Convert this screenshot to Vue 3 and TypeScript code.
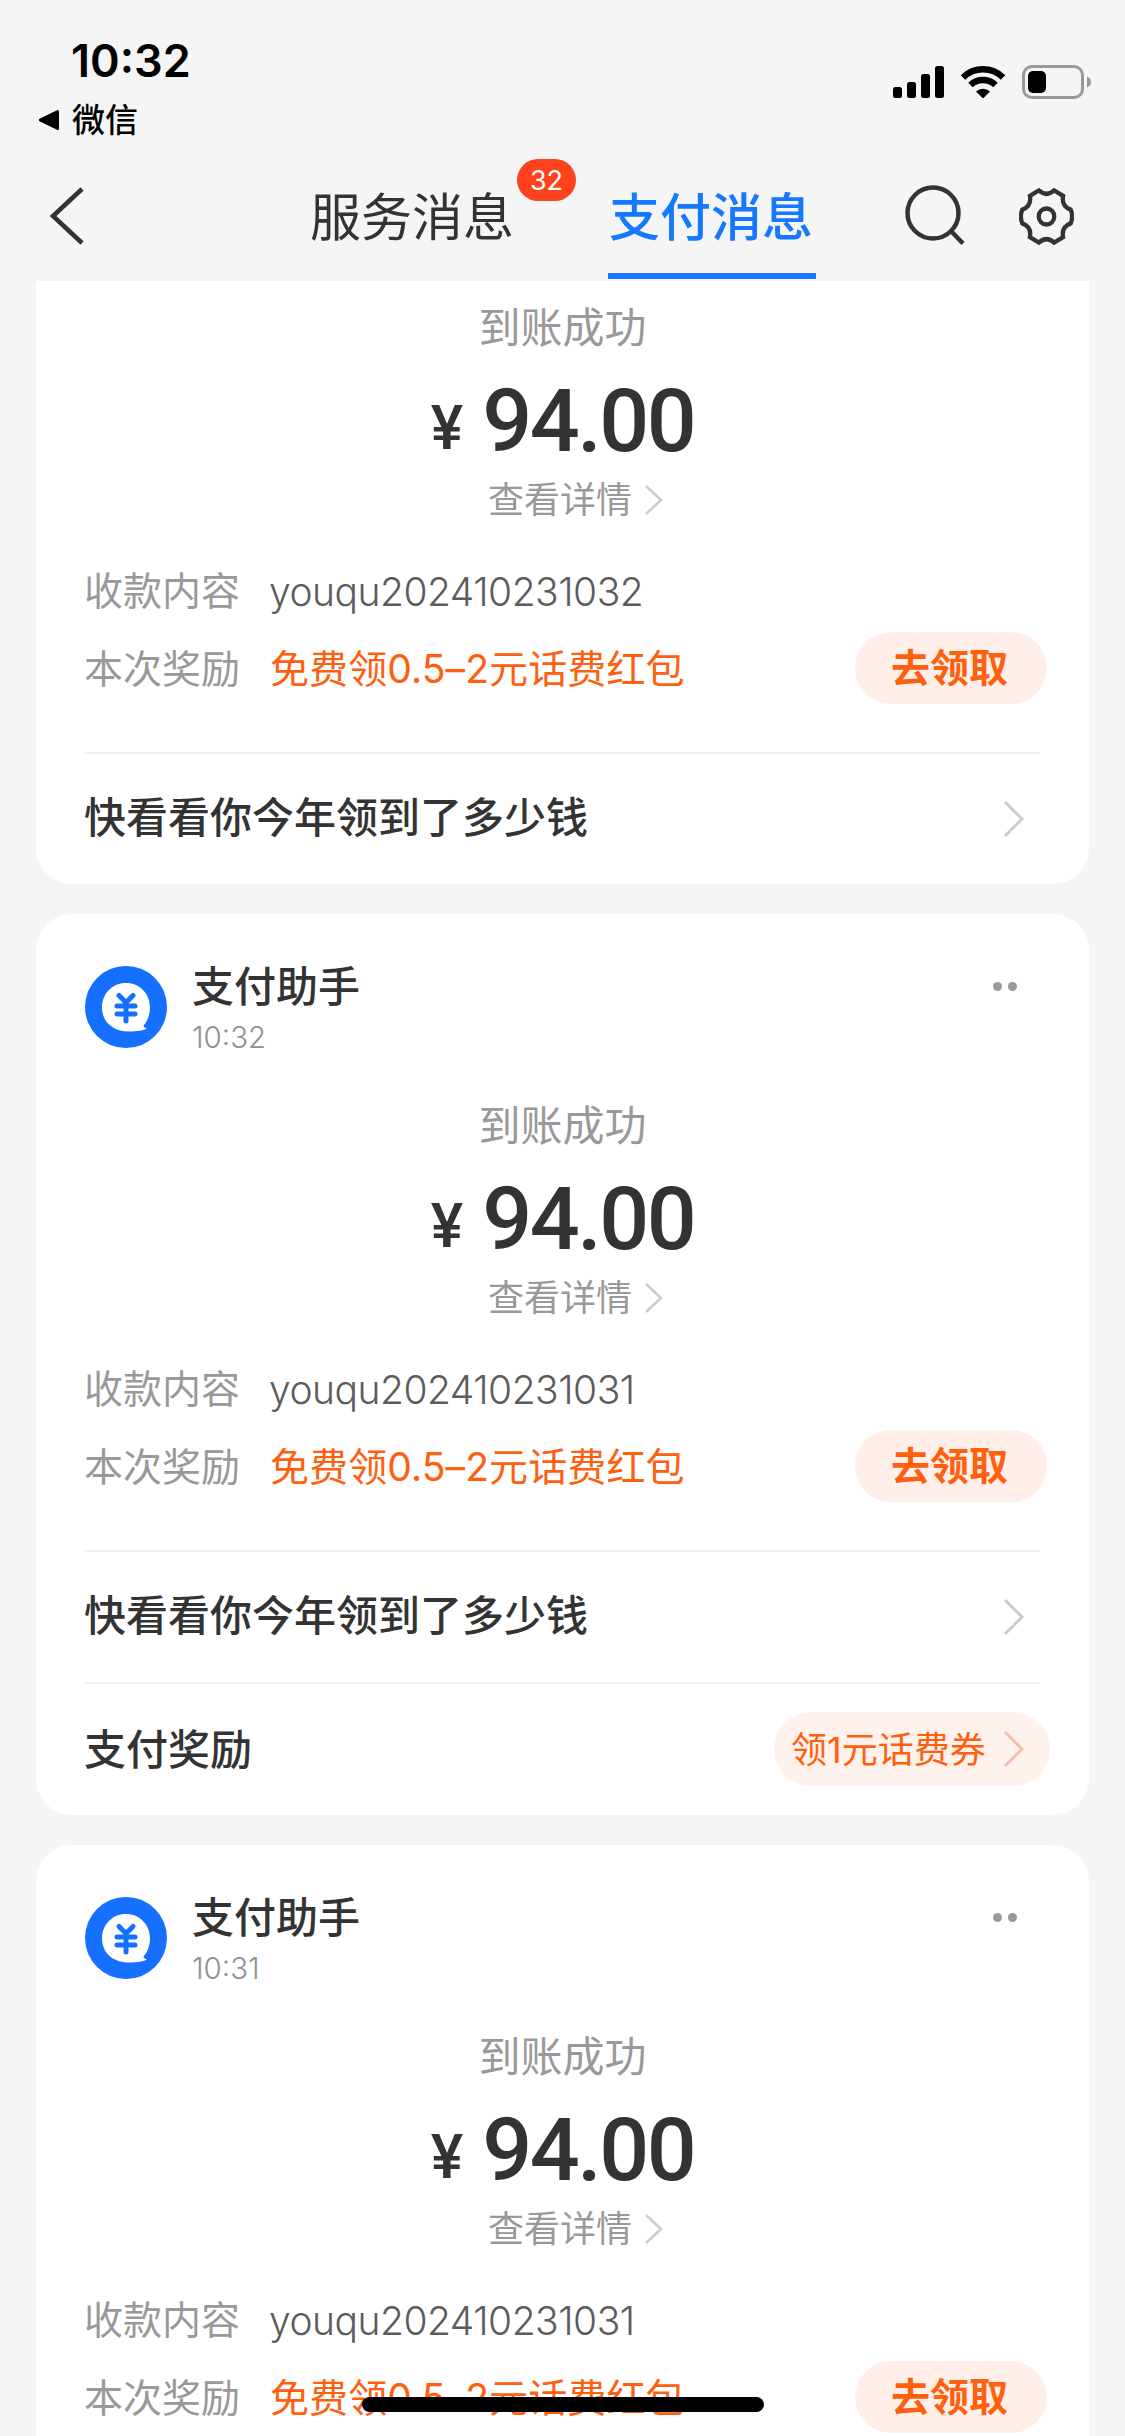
<script setup lang="ts">
interface Message {
  time: string
  memo: string
  partial?: boolean
  promo?: boolean
  coupon?: boolean
}

const messages: Message[] = [
  { time: '', memo: 'youqu202410231032', partial: true, promo: true },
  { time: '10:32', memo: 'youqu202410231031', promo: true, coupon: true },
  { time: '10:31', memo: 'youqu202410231031' },
]
</script>

<template>
  <div class="screen">
    <header class="top">
      <div class="status">
        <div class="status-left">
          <div class="clock">10:32</div>
          <div class="return">
            <svg width="22" height="22" viewBox="0 0 22 22"><path d="M2 9.6 19 1.2Q21 .4 21 2.5V19.5Q21 21.600 19 20.800L2 12.400Q-.4 11 2 9.600Z" /></svg>
            <span>微信</span>
          </div>
        </div>
        <div class="status-icons">
          <svg width="51" height="34" viewBox="0 0 51 34">
            <rect x="0" y="22" width="9" height="11" rx="2.500" />
            <rect x="14" y="17" width="9" height="16" rx="2.500" />
            <rect x="28" y="9" width="9" height="24" rx="2.500" />
            <rect x="42" y="1" width="9" height="32" rx="2.500" />
          </svg>
          <svg class="wifi" width="46" height="34" viewBox="0 0 46 34">
            <path d="M3 12.500A28.500 28.500 0 0 1 43 12.500M10.500 20A18 18 0 0 1 35.500 20" fill="none" stroke="#000" stroke-width="6.400" />
            <path d="M16 26.500A10 10 0 0 1 30 26.500L24 32.500Q23 33.500 22 32.500Z" />
          </svg>
          <svg class="battery" width="70" height="34" viewBox="0 0 70 34">
            <rect x="1.500" y="1.500" width="59" height="31" rx="8.500" fill="none" stroke="#999" stroke-width="3" />
            <rect x="6" y="6" width="18" height="22" rx="5" />
            <path d="M65 11.500Q69 13 69 17T65 22.500Z" fill="#999" />
          </svg>
        </div>
      </div>
      <nav class="nav">
        <svg class="back" width="36" height="60" viewBox="0 0 36 60"><path d="M33 3 4 30 33 57" /></svg>
        <div class="tab first">服务消息<span class="badge">32</span></div>
        <div class="tab active">支付消息</div>
        <svg class="search" width="62" height="62" viewBox="0 0 62 62"><circle cx="28" cy="28" r="25.500" /><path d="M46 46 58 58.500" /></svg>
        <svg class="gear" width="55" height="57" viewBox="0 0 58 58" preserveAspectRatio="none">
          <path d="M21 2.500Q29 9.500 37 2.500L46.500 8Q44.500 18.500 54.500 22Q57.500 29 54.500 36Q44.500 39.500 46.500 50L37 55.500Q29 48.500 21 55.500L11.500 50Q13.500 39.500 3.500 36Q.5 29 3.500 22Q13.500 18.500 11.500 8Z" />
          <circle cx="29" cy="29" r="8.200" />
        </svg>
      </nav>
    </header>

    <main class="list">
      <section v-for="(m, i) in messages" :key="i" class="card" :class="{ partial: m.partial }">
        <div v-if="!m.partial" class="head">
          <svg class="avatar" width="82" height="82" viewBox="0 0 82 82">
            <circle cx="41" cy="41" r="41" fill="#1570ff" />
            <path d="M41 17C27.500 17 17 27.500 17 41.500 17 56 28 65.500 44 65.500 52 65.500 59 64.500 62 62.500 60.500 62 58.500 61 58.500 59.500 62 56 65 49 65 41.500 65 27.500 54.500 17 41 17Z" fill="#fff" />
            <path d="M34 29.500 41 36.500 48 29.500M32 40H50M32 48H50M41 38V55" fill="none" stroke="#1570ff" stroke-width="5" stroke-linecap="round" />
          </svg>
          <div class="who">
            <div class="name">支付助手</div>
            <div class="time">{{ m.time }}</div>
          </div>
          <div class="more"><i></i><i></i></div>
        </div>

        <div class="summary">
          <div class="state">到账成功</div>
          <div class="amount"><span class="yen">¥</span><span class="num">94.00</span></div>
          <div class="detail">
            <span>查看详情</span>
            <svg width="20" height="32" viewBox="0 0 20 32"><path d="M2 2 17 16 2 30" /></svg>
          </div>
        </div>

        <div class="row"><span class="label">收款内容</span><span class="memo">{{ m.memo }}</span></div>
        <div class="row">
          <span class="label">本次奖励</span><span class="reward">免费领0.5–2元话费红包</span>
          <span class="claim">去领取</span>
        </div>

        <div v-if="m.promo" class="link">
          <span class="title">快看看你今年领到了多少钱</span>
          <svg width="22" height="38" viewBox="0 0 22 38"><path d="M2 2 19 19 2 36" /></svg>
        </div>
        <div v-if="m.coupon" class="link coupon">
          <span class="title">支付奖励</span>
          <div class="ticket">
            <span class="offer">领1元话费券</span>
            <svg width="22" height="38" viewBox="0 0 22 38"><path d="M2 2 19 19 2 36" /></svg>
          </div>
        </div>
      </section>
    </main>
    <div class="home-bar"></div>
  </div>
</template>

<style>
body {
  margin: 0;
  overflow: hidden;
}
</style>

<style scoped>
.screen {
  position: relative;
  width: 1125px;
  height: 2436px;
  overflow: hidden;
  background: #f5f5f5;
  color: #333;
  font-family: Inter, "Noto Sans CJK SC", sans-serif;
  white-space: nowrap;
}
svg {
  display: block;
  flex: none;
}
.top {
  height: 281px;
}
.status {
  display: flex;
  justify-content: space-between;
  height: 154px;
  padding: 0 33px 0 38px;
  box-sizing: border-box;
  color: #000;
}
.clock {
  margin: 33px 0 0 33px;
  height: 56px;
  line-height: 56px;
  font-size: 45px;
  font-weight: 600;
}
.return {
  display: flex;
  align-items: center;
  gap: 12px;
  height: 48px;
  margin-top: 7px;
  line-height: 48px;
  font-size: 33px;
  font-weight: 500;
}
.status-icons {
  display: flex;
  padding-top: 65px;
}
.wifi {
  margin-left: 16px;
}
.battery {
  margin-left: 16px;
}
.nav {
  display: flex;
  height: 127px;
}
.nav svg {
  fill: none;
  stroke: #333;
  stroke-width: 4.500;
}
.back {
  margin: 32px 0 0 49px;
}
.tab {
  position: relative;
  box-sizing: border-box;
  height: 125px;
  padding: 27px 2px 0;
  line-height: 74px;
  font-size: 51px;
}
.tab.first {
  margin-left: 223px;
}
.tab.active {
  margin-left: 92px;
  padding-left: 1px;
  padding-right: 3px;
  border-bottom: 6px solid #1677ff;
  color: #1677ff;
  font-weight: 500;
}
.badge {
  position: absolute;
  left: 209px;
  top: 5px;
  width: 59px;
  height: 42px;
  border-radius: 21px;
  background: #ff411c;
  color: #fff;
  font-size: 27px;
  line-height: 43px;
  text-align: center;
}
.search {
  margin: 31px 0 0 89px;
}
.gear {
  margin: 34px 0 0 52px;
}
.list {
  display: flex;
  flex-direction: column;
  gap: 30px;
  padding: 0 36px;
}
.card {
  box-sizing: border-box;
  padding: 52px 49px 0 49px;
  border-radius: 36px;
  background: #fff;
}
.card:last-child {
  min-height: 800px;
}
.card.partial {
  padding-top: 1px;
  border-radius: 0 0 36px 36px;
}
.head {
  display: flex;
  height: 114px;
}
.who {
  margin-left: 25px;
}
.name {
  margin-top: -9px;
  height: 60px;
  line-height: 60px;
  font-size: 42px;
  font-weight: 500;
}
.time {
  height: 44px;
  line-height: 41px;
  font-size: 29.500px;
  font-weight: 300;
  color: #8f8f8f;
}
.more {
  display: flex;
  gap: 6px;
  margin: 16px 23px 0 auto;
}
.more i {
  width: 9px;
  height: 9px;
  border-radius: 50%;
  background: #999;
}
.summary {
  display: flex;
  flex-direction: column;
  align-items: center;
  height: 270px;
  padding-top: 16px;
  box-sizing: border-box;
}
.state {
  height: 60px;
  line-height: 60px;
  font-size: 42px;
  color: #999;
}
.amount {
  display: flex;
  align-items: baseline;
  gap: 19px;
  height: 104px;
  margin-top: 11px;
  margin-bottom: 1px;
  line-height: 104px;
  font-family: Roboto, sans-serif;
  font-weight: 500;
  color: #333;
}
.yen {
  position: relative;
  top: -2px;
  font-size: 61px;
}
.num {
  font-size: 88px;
  letter-spacing: -2.500px;
}
.detail {
  display: flex;
  align-items: center;
  gap: 12px;
  height: 52px;
  margin-left: 27px;
  line-height: 52px;
  font-size: 36px;
  color: #999;
}
.detail svg {
  fill: none;
  stroke: #ccc;
  stroke-width: 2.500;
}
.row {
  display: flex;
  align-items: center;
  height: 78px;
  font-size: 39px;
  margin-right: -7px;
}
.label {
  width: 186px;
  margin: -6px 0 0 -1px;
  color: #999;
}
.memo {
  margin-left: -1px;
  color: #5c5c5c;
  font-weight: 300;
  letter-spacing: -0.500px;
}
.reward {
  margin-top: -6px;
  color: #ff6010;
  letter-spacing: 0.100px;
}
.claim {
  box-sizing: border-box;
  width: 192px;
  height: 72px;
  margin: -2px 0 0 auto;
  padding-left: 36px;
  border-radius: 36px;
  background: #ffefe8;
  color: #ff6010;
  line-height: 72px;
  font-size: 39px;
  font-weight: 700;
}
.link {
  display: flex;
  align-items: center;
  justify-content: space-between;
  box-sizing: border-box;
  height: 132px;
  padding-right: 15px;
  border-top: 2px solid #f0f0f0;
  font-size: 42px;
  font-weight: 500;
}
.link.coupon {
  height: 133px;
}
.title {
  margin: -9px 0 0 -1px;
}
.coupon .title {
  margin-top: -6px;
}
.row + .link {
  margin-top: 44px;
}
.link svg {
  fill: none;
  stroke: #ccc;
  stroke-width: 3;
}
.ticket {
  display: flex;
  align-items: center;
  justify-content: space-between;
  box-sizing: border-box;
  width: 276px;
  height: 74px;
  margin: -2px -25px 0 0;
  padding: 0 25px 0 17px;
  border-radius: 37px;
  background: #fff2ec;
  color: #ff6010;
  font-size: 36px;
  font-weight: 400;
}
.offer {
  margin-top: -3px;
}
.link .ticket svg {
  stroke: #f6bfa6;
}
.home-bar {
  position: absolute;
  left: 362px;
  top: 2397px;
  width: 402px;
  height: 15px;
  border-radius: 8px;
  background: #000;
}
</style>
